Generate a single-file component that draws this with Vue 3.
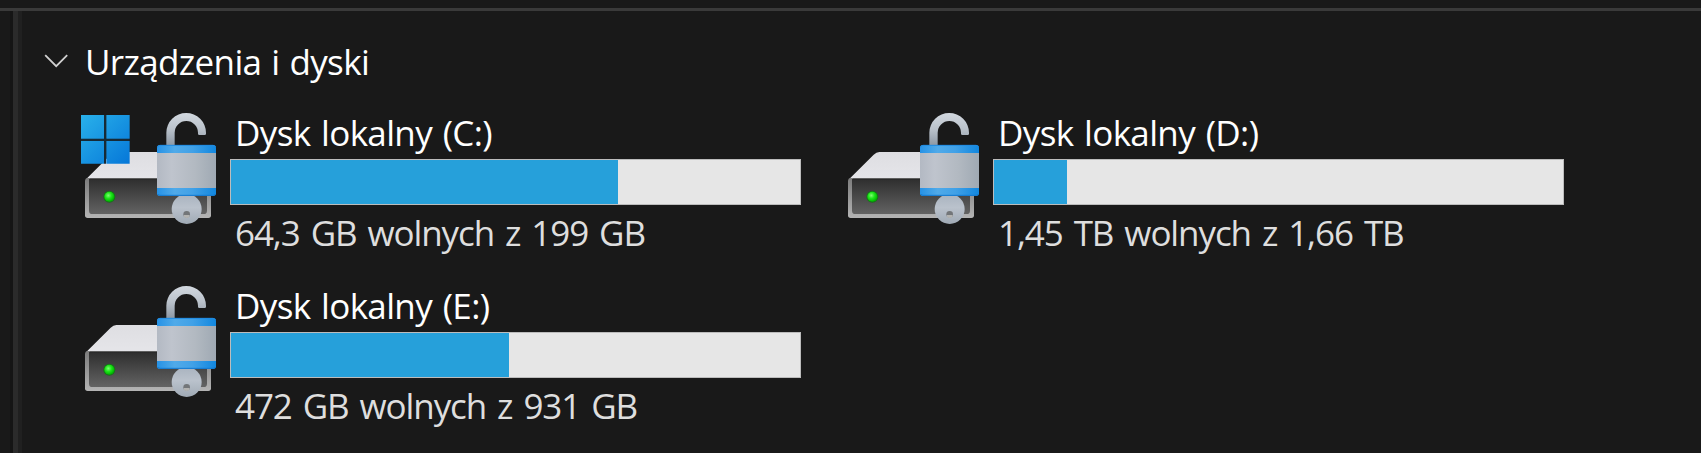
<template>
  <div class="explorer">
    <div class="toolbar-edge"></div>
    <div class="body">
      <div class="nav-edge"></div>
      <div class="splitter"></div>
      <main>
        <h2>
          <svg class="chevron" viewBox="0 0 26 16">
            <path d="M2.2 2.2 L13.2 13.2 L24.2 2.2" />
          </svg>
          <span>Urządzenia i dyski</span>
        </h2>

        <div class="drives">
          <div v-for="drive in drives" :key="drive.letter" class="drive">
            <svg class="icon" viewBox="18 30 462 354">
              <defs>
                <linearGradient id="front" x1="0" y1="0" x2="0" y2="1">
                  <stop offset="0" stop-color="#2e2e2e" />
                  <stop offset="1" stop-color="#636363" />
                </linearGradient>
                <linearGradient id="rim" x1="0" y1="0" x2="0" y2="1">
                  <stop offset="0" stop-color="#7c7c7c" />
                  <stop offset="1" stop-color="#b4b4b4" />
                </linearGradient>
                <linearGradient id="lid" x1="0" y1="0" x2="0" y2="1">
                  <stop offset="0" stop-color="#dedee2" />
                  <stop offset="1" stop-color="#e5e5e9" />
                </linearGradient>
                <linearGradient id="steel" x1="0" y1="0" x2="1" y2="0">
                  <stop offset="0" stop-color="#b3b9c3" />
                  <stop offset="0.25" stop-color="#bfc4cd" />
                  <stop offset="0.65" stop-color="#b2b9c1" />
                  <stop offset="1" stop-color="#9fa9b3" />
                </linearGradient>
                <linearGradient id="band" x1="0" y1="0" x2="1" y2="0">
                  <stop offset="0" stop-color="#2692e6" />
                  <stop offset="0.3" stop-color="#50aae9" />
                  <stop offset="0.6" stop-color="#41a1e7" />
                  <stop offset="1" stop-color="#1187df" />
                </linearGradient>
                <linearGradient id="shackle" x1="0" y1="0" x2="0" y2="1">
                  <stop offset="0" stop-color="#d2d8df" />
                  <stop offset="0.5" stop-color="#bac2cb" />
                  <stop offset="1" stop-color="#8d98a4" />
                </linearGradient>
                <linearGradient id="key" x1="0" y1="0" x2="0" y2="1">
                  <stop offset="0" stop-color="#a9b3bf" />
                  <stop offset="0.45" stop-color="#bac2cc" />
                  <stop offset="1" stop-color="#a0aab5" />
                </linearGradient>
                <linearGradient id="win" gradientUnits="userSpaceOnUse" x1="33" y1="45" x2="179" y2="191">
                  <stop offset="0" stop-color="#29b1ea" />
                  <stop offset="1" stop-color="#0677d8" />
                </linearGradient>
                <radialGradient id="led" cx="0.4" cy="0.38" r="0.6">
                  <stop offset="0" stop-color="#82fb76" />
                  <stop offset="0.5" stop-color="#20e71c" />
                  <stop offset="1" stop-color="#00b900" />
                </radialGradient>
              </defs>

              <!-- drive body -->
              <path d="M48 238 L122 164 Q130 156 139 156 H420 V238 Z" fill="url(#lid)" />
              <path d="M53 234 H423 V346 Q423 354 415 354 H53 Q45 354 45 346 V242 Q45 235 53 234 Z" fill="url(#rim)" />
              <path d="M57 237 H411 V332 Q411 342 401 342 H67 Q57 342 57 332 Z" fill="url(#front)" />
              <path d="M60 237 H411" stroke="#252525" stroke-width="2" />
              <circle cx="118" cy="290" r="18" fill="#177319" />
              <circle cx="118" cy="290" r="15" fill="url(#led)" />

              <g v-if="drive.system">
                <path d="M33 117 H179 V123 H33 Z M102 45 H108 V191 H102 Z" fill="#172a36" />
                <path
                  d="M33 45 H102 V116 H33 Z M109 45 H179 V116 H109 Z M33 123 H102 V191 H33 Z M109 123 H179 V191 H109 Z"
                  fill="url(#win)"
                />
              </g>

              <!-- unlocked padlock -->
              <circle cx="350" cy="327" r="45" fill="url(#key)" />
              <circle cx="350" cy="343" r="10" fill="#737679" />
              <path d="M341 345 A9 9 0 0 0 359 345 Z" fill="#b4b4b2" />
              <path
                d="M289 136 V98 A59.5 59 0 0 1 408 98 V101 Q408 105 404 105 H388 Q384 105 384 101 V98 A35 35 0 0 0 314 98 V136 Z"
                fill="url(#shackle)"
              />
              <rect x="261" y="135" width="177" height="153" rx="8" fill="url(#band)" />
              <path d="M263 141 Q264 136 270 136 H429 Q435 136 436 141" fill="none" stroke="#208be1" stroke-width="3" />
              <path d="M263 282 Q264 286 270 286 H429 Q435 286 436 282" fill="none" stroke="#1278cf" stroke-width="3" />
              <rect x="261" y="159" width="177" height="105" fill="url(#steel)" />
            </svg>

            <div class="info">
              <div class="name">Dysk lokalny ({{ drive.letter }}:)</div>
              <div class="bar">
                <div class="used" :style="{ width: drive.used + '%' }"></div>
              </div>
              <div class="space">{{ drive.free }} wolnych z {{ drive.total }}</div>
            </div>
          </div>
        </div>
      </main>
    </div>
  </div>
</template>

<script setup>
const drives = [
  { letter: 'C', free: '64,3 GB', total: '199 GB', used: 68.01, system: true },
  { letter: 'D', free: '1,45 TB', total: '1,66 TB', used: 12.83 },
  { letter: 'E', free: '472 GB', total: '931 GB', used: 48.86 }
]
</script>

<style>
body {
  background: #191919;
}
</style>

<style scoped>
* {
  box-sizing: border-box;
}

.explorer {
  display: flex;
  flex-direction: column;
  height: 100vh;
  overflow: hidden;
  background: #191919;
  color: #fff;
  font-family: 'Open Sans', 'Noto Sans', sans-serif;
  font-size: 35px;
}

.toolbar-edge {
  flex: none;
  height: 11px;
  border-bottom: 3px solid #3a3a3a;
}

.body {
  display: flex;
  flex: 1;
}

.nav-edge {
  width: 13px;
  border-right: 3px solid #151515;
}

.splitter {
  width: 9px;
  background: #202020;
  border-left: 5px solid #2b2b2b;
}

main {
  flex: 1;
  padding: 28px 0 0 54px;
}

h2 {
  display: flex;
  align-items: center;
  height: 44px;
  margin: 0 0 27px -33px;
  font-size: inherit;
  font-weight: 400;
  line-height: 44px;
  letter-spacing: -0.65px;
  word-spacing: 1.5px;
}

h2 span {
  padding-top: 2px;
}

.chevron {
  width: 26px;
  height: 16px;
  margin-right: 16px;
  fill: none;
  stroke: #d0d0d0;
  stroke-width: 1.8;
}

.drives {
  display: grid;
  grid-template-columns: 725px 725px;
  gap: 28px 38px;
}

.drive {
  display: flex;
  height: 145px;
}

.icon {
  flex: none;
  width: 154px;
  height: 118px;
}

.info {
  flex: 1;
  white-space: nowrap;
}

.name {
  height: 49px;
  padding-left: 5px;
  line-height: 46px;
  letter-spacing: -0.65px;
  word-spacing: 2.2px;
}

.bar {
  height: 46px;
  background: #e6e6e6;
  border: 1px solid #bcbcbc;
}

.used {
  height: 100%;
  background: #26a0da;
}

.space {
  padding-left: 5px;
  color: #dedede;
  line-height: 56px;
  letter-spacing: -1.1px;
  word-spacing: 3px;
}
</style>
